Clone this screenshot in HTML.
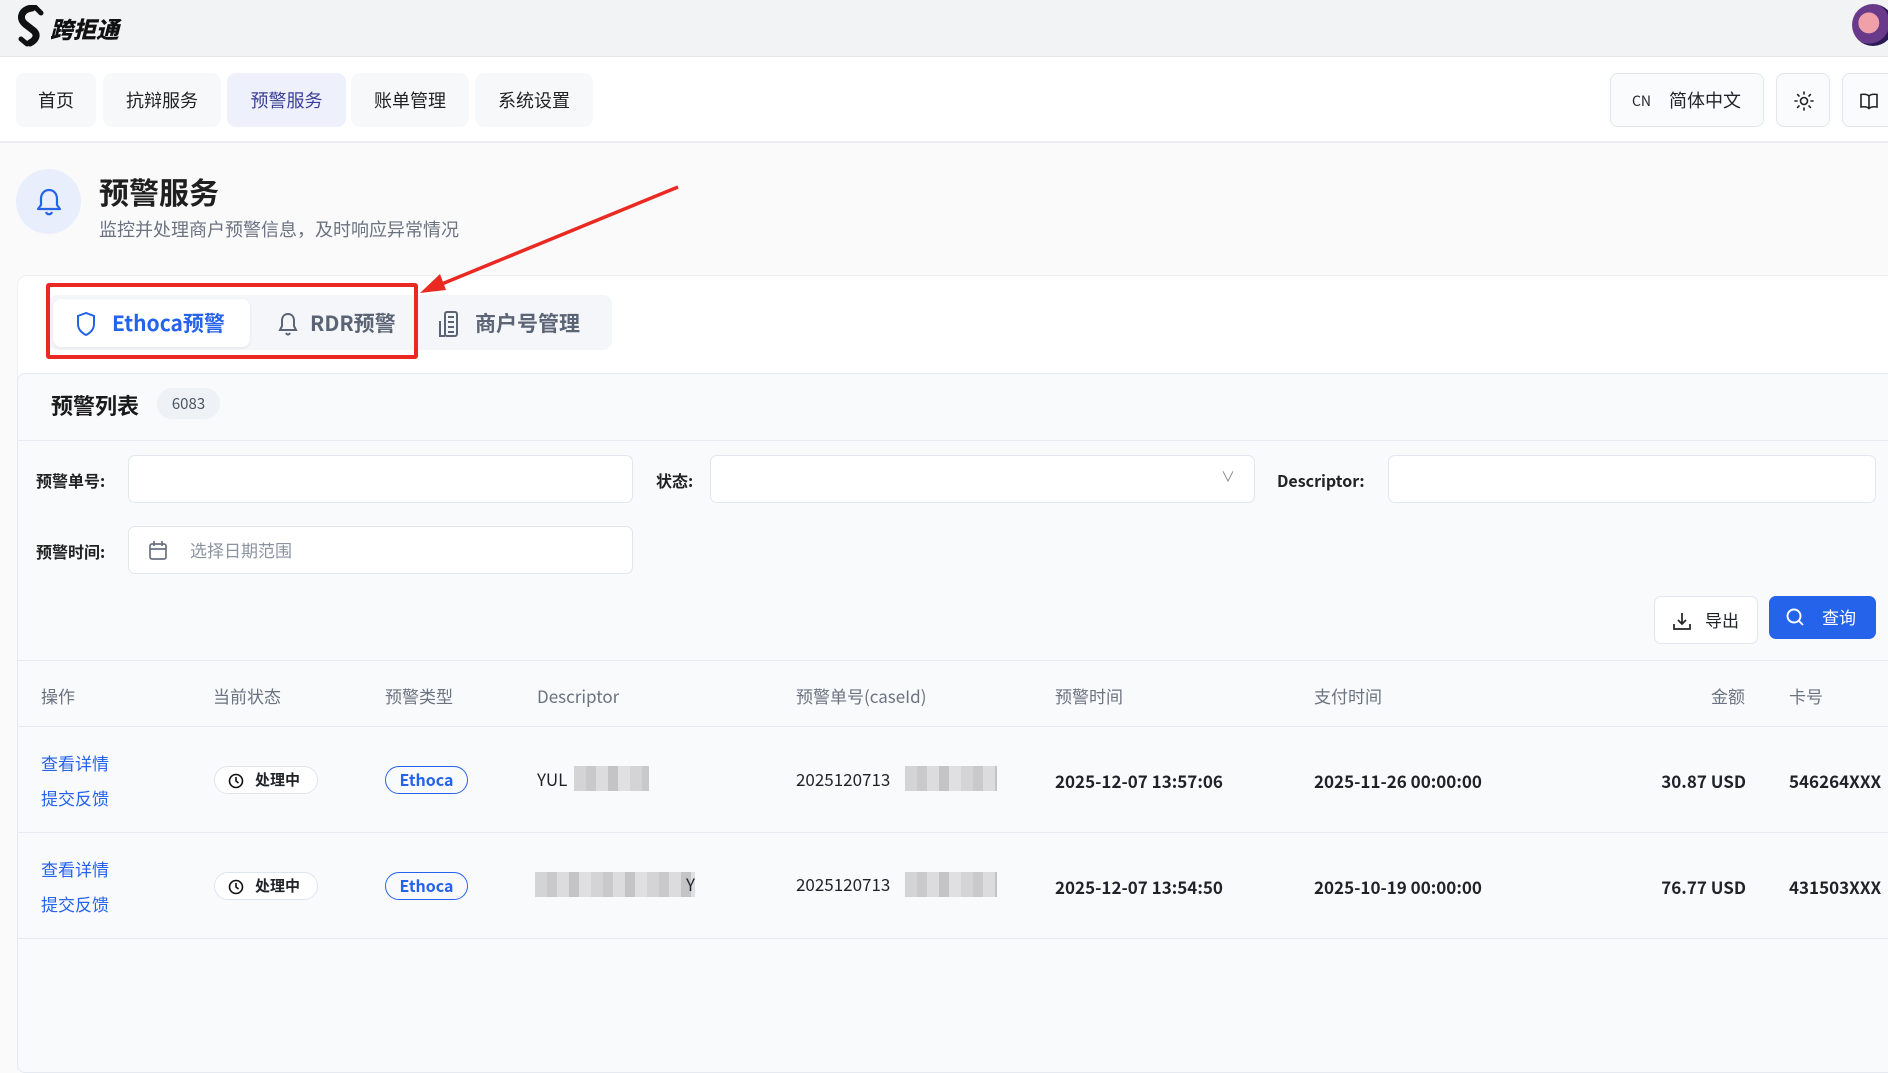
<!DOCTYPE html>
<html><head><meta charset="utf-8"><style>
*{box-sizing:border-box;margin:0;padding:0}
body{width:1888px;height:943px;overflow:hidden;background:#fafafb;font-family:"Noto Sans CJK SC","Liberation Sans",sans-serif;color:#1f2328;position:relative}
.abs{position:absolute}
.top{left:0;top:0;width:1888px;height:57px;background:#f2f3f5;border-bottom:1px solid #e5e7eb}
.nav{left:0;top:57px;width:1888px;height:86px;background:#fff;border-bottom:2px solid #ebedf0}
.tab{position:absolute;top:16px;height:54px;background:#f7f8fa;border-radius:9px;font-size:18px;line-height:54px;text-align:center;color:#222}
.tab.on{background:#eef1fc;color:#3b3f99}
.btn{position:absolute;top:16px;height:54px;border:1px solid #e2e6ee;border-radius:8px;background:#fafbfc}
.card{left:17px;top:275px;width:1900px;height:700px;background:#fff;border-radius:10px;border:1px solid #eef0f3}
.tg{left:48px;top:295px;width:564px;height:55px;background:#f4f6f9;border-radius:9px}
.tb{position:absolute;top:4px;height:48px;font-size:21px;font-weight:bold;line-height:48px;color:#5b6475}
.inner{left:17px;top:373px;width:1900px;height:700px;background:#f9fafc;border:1px solid #e6e9ef;border-radius:8px}
.lbl{position:absolute;font-size:16px;font-weight:bold;color:#222;line-height:24px}
.inp{position:absolute;height:48px;background:#fff;border:1px solid #e2e6ee;border-radius:7px}
.th{position:absolute;top:683px;font-size:17px;color:#6b7280;line-height:26px}
.td{position:absolute;font-size:17px;color:#1f2328;line-height:26px}
.b{font-weight:bold}
.lk{position:absolute;left:41px;font-size:17px;color:#2563eb;line-height:26px}
.st{position:absolute;left:214px;width:104px;height:28px;border:1px solid #dfe5f0;border-radius:14px;background:#fff;font-size:15px;font-weight:bold;line-height:26px;padding-left:40px}
.et{position:absolute;left:385px;width:83px;height:28px;border:1.5px solid #2563eb;border-radius:14px;font-size:16px;font-weight:bold;color:#2563eb;line-height:25px;text-align:center}
.line{position:absolute;left:17px;width:1900px;height:1px;background:#e6e9ef}
.blur{position:absolute;background:repeating-linear-gradient(90deg,#d4d4d6 0 12px,#c9c9cc 12px 22px,#dcdcde 22px 34px,#c4c4c7 34px 44px,#e0e0e2 44px 56px)}
</style></head><body>
<div class="abs top"></div>
<svg class="abs" style="left:15px;top:5px" width="32" height="42" viewBox="0 0 32 42"><path d="M17 3 C7 4 3 13 10 19 L19 26 C23 30 21 35 15 38" stroke="#111" stroke-width="7" fill="none" stroke-linecap="round"/><path d="M20 2 L26 8" stroke="#111" stroke-width="5" stroke-linecap="round"/><path d="M12 39 L6 34" stroke="#111" stroke-width="5" stroke-linecap="round"/></svg>
<div class="abs" style="left:50px;top:11px;font-size:23px;font-weight:900;font-style:italic;color:#111;line-height:34px">跨拒通</div>
<div class="abs" style="left:1852px;top:4px;width:42px;height:42px;border-radius:50%;background:radial-gradient(circle at 40% 45%,#f0a0a8 0 30%,#6a3a8a 31% 60%,#2a1b55 61%)"></div>

<div class="abs nav">
<div class="tab" style="left:16px;width:80px">首页</div>
<div class="tab" style="left:103px;width:118px">抗辩服务</div>
<div class="tab on" style="left:227px;width:119px">预警服务</div>
<div class="tab" style="left:351px;width:118px">账单管理</div>
<div class="tab" style="left:475px;width:118px">系统设置</div>
<div class="btn" style="left:1610px;width:154px"><span class="abs" style="left:21px;top:15px;font-size:14px;line-height:24px">CN</span><span class="abs" style="left:58px;top:12px;font-size:18px;line-height:28px">简体中文</span></div>
<div class="btn" style="left:1776px;width:54px"><svg class="abs" style="left:17px;top:17px" width="20" height="20" viewBox="0 0 20 20" fill="none" stroke="#222" stroke-width="1.6" stroke-linecap="round"><circle cx="10" cy="10" r="3.5"/><path d="M10 1v2M10 17v2M1 10h2M17 10h2M3.6 3.6l1.4 1.4M15 15l1.4 1.4M3.6 16.4L5 15M15 5l1.4-1.4"/></svg></div>
<div class="btn" style="left:1842px;width:60px"><svg class="abs" style="left:16px;top:17px" width="20" height="20" viewBox="0 0 20 20" fill="none" stroke="#222" stroke-width="1.6"><path d="M10 5C8 3 5 3 2 3.5V16c3-.5 6-.5 8 1.5 2-2 5-2 8-1.5V3.5C15 3 12 3 10 5zM10 5v12"/></svg></div>
</div>

<div class="abs" style="left:16px;top:169px;width:65px;height:65px;border-radius:50%;background:#e8eefb"></div>
<svg class="abs" style="left:35px;top:187px" width="28" height="30" viewBox="0 0 28 30" fill="none" stroke="#2563eb" stroke-width="2.2" stroke-linejoin="round"><path d="M14 3c-5 0-8 4-8 9v6l-3 4h22l-3-4v-6c0-5-3-9-8-9zM11 25c1 3 5 3 6 0"/></svg>
<div class="abs" style="left:99px;top:170px;font-size:30px;font-weight:bold;color:#1f1f1f;line-height:42px">预警服务</div>
<div class="abs" style="left:99px;top:215px;font-size:18px;color:#6b7280;line-height:28px">监控并处理商户预警信息，及时响应异常情况</div>

<div class="abs card"></div>
<div class="abs tg">
<div class="tb" style="left:5px;width:197px;background:#fff;border-radius:8px;color:#2563eb;box-shadow:0 1px 3px rgba(0,0,0,.08)"><svg class="abs" style="left:22px;top:12px" width="22" height="26" viewBox="0 0 22 26" fill="none" stroke="#2563eb" stroke-width="2"><path d="M11 2L3 5v8c0 6 4 9 8 11 4-2 8-5 8-11V5z"/></svg><span style="position:absolute;left:59px">Ethoca预警</span></div>
<div class="tb" style="left:205px;width:160px"><svg class="abs" style="left:24px;top:12px" width="22" height="26" viewBox="0 0 22 26" fill="none" stroke="#5b6475" stroke-width="2"><path d="M11 3c-4 0-6 3-6 7v5l-2 4h16l-2-4v-5c0-4-2-7-6-7zM9 22c1 2 3 2 4 0"/></svg><span style="position:absolute;left:57px">RDR预警</span></div>
<div class="tb" style="left:370px;width:190px"><svg class="abs" style="left:19px;top:10px" width="26" height="30" viewBox="0 0 26 30" fill="none" stroke="#5b6475" stroke-width="2"><rect x="8" y="3" width="12" height="24" rx="2"/><path d="M3 12v15h5M11 8h6M11 13h6M11 18h6M11 23h6"/></svg><span style="position:absolute;left:57px">商户号管理</span></div>
</div>
<div class="abs" style="left:46px;top:283px;width:372px;height:76px;border:4px solid #ea2a22;border-radius:3px"></div>
<svg class="abs" style="left:410px;top:180px" width="280" height="120"><path d="M268 7 L22 108" stroke="#ea2a22" stroke-width="3.5"/><path d="M10 113 L30 94 L36 110 Z" fill="#ea2a22"/></svg>

<div class="abs inner"></div>
<div class="abs" style="left:51px;top:389px;font-size:22px;font-weight:bold;color:#1a1a1a;line-height:32px">预警列表</div>
<div class="abs" style="left:157px;top:388px;width:63px;height:31px;border-radius:15px;background:#eef1f5;font-size:15px;color:#4b5563;text-align:center;line-height:31px">6083</div>
<div class="line" style="top:440px"></div>

<div class="lbl" style="left:36px;top:468px">预警单号:</div>
<div class="inp" style="left:128px;top:455px;width:505px"></div>
<div class="lbl" style="left:656px;top:468px">状态:</div>
<div class="inp" style="left:710px;top:455px;width:545px"><span class="abs" style="left:510px;top:11px;font-size:14px;color:#888">&#8744;</span></div>
<div class="lbl" style="left:1277px;top:468px">Descriptor:</div>
<div class="inp" style="left:1388px;top:455px;width:488px"></div>
<div class="lbl" style="left:36px;top:539px">预警时间:</div>
<div class="inp" style="left:128px;top:526px;width:505px"><svg class="abs" style="left:19px;top:13px" width="20" height="21" viewBox="0 0 20 21" fill="none" stroke="#6b7280" stroke-width="1.7"><rect x="2" y="4" width="16" height="15" rx="2"/><path d="M2 9h16M6 1v5M14 1v5"/></svg><span class="abs" style="left:61px;top:10px;font-size:17px;color:#8b93a1;line-height:26px">选择日期范围</span></div>

<div class="abs" style="left:1654px;top:596px;width:104px;height:48px;background:#fff;border:1px solid #e2e6ee;border-radius:7px"><svg class="abs" style="left:17px;top:14px" width="20" height="20" viewBox="0 0 20 20" fill="none" stroke="#222" stroke-width="1.7"><path d="M10 2v11M6 9l4 4 4-4M2 13v5h16v-5"/></svg><span class="abs" style="left:50px;top:10px;font-size:17px;line-height:26px">导出</span></div>
<div class="abs" style="left:1769px;top:596px;width:107px;height:43px;background:#2563eb;border-radius:7px"><svg class="abs" style="left:16px;top:11px" width="20" height="20" viewBox="0 0 20 20" fill="none" stroke="#fff" stroke-width="1.9"><circle cx="9" cy="9" r="6.5"/><path d="M14 14l4 4"/></svg><span class="abs" style="left:53px;top:8px;font-size:17px;color:#fff;line-height:26px">查询</span></div>

<div class="line" style="top:660px"></div>
<div class="th" style="left:41px">操作</div>
<div class="th" style="left:213px">当前状态</div>
<div class="th" style="left:385px">预警类型</div>
<div class="th" style="left:537px">Descriptor</div>
<div class="th" style="left:796px">预警单号(caseId)</div>
<div class="th" style="left:1055px">预警时间</div>
<div class="th" style="left:1314px">支付时间</div>
<div class="th" style="left:1711px">金额</div>
<div class="th" style="left:1789px">卡号</div>
<div class="line" style="top:726px"></div>

<div class="lk" style="top:750px">查看详情</div>
<div class="lk" style="top:785px">提交反馈</div>
<div class="st" style="top:766px"><svg class="abs" style="left:13px;top:6px" width="16" height="16" viewBox="0 0 16 16" fill="none" stroke="#111" stroke-width="1.6"><circle cx="8" cy="8" r="6.5"/><path d="M8 4v4l2.5 2"/></svg>处理中</div>
<div class="et" style="top:766px">Ethoca</div>
<div class="td" style="left:537px;top:766px">YUL</div>
<div class="blur" style="left:574px;top:766px;width:75px;height:25px"></div>
<div class="td" style="left:796px;top:766px">2025120713</div>
<div class="blur" style="left:905px;top:766px;width:92px;height:25px"></div>
<div class="td b" style="left:1055px;top:768px">2025-12-07 13:57:06</div>
<div class="td b" style="left:1314px;top:768px">2025-11-26 00:00:00</div>
<div class="td b" style="left:1656px;top:768px;width:90px;text-align:right">30.87 USD</div>
<div class="td b" style="left:1789px;top:768px">546264XXX</div>
<div class="line" style="top:832px"></div>

<div class="lk" style="top:856px">查看详情</div>
<div class="lk" style="top:891px">提交反馈</div>
<div class="st" style="top:872px"><svg class="abs" style="left:13px;top:6px" width="16" height="16" viewBox="0 0 16 16" fill="none" stroke="#111" stroke-width="1.6"><circle cx="8" cy="8" r="6.5"/><path d="M8 4v4l2.5 2"/></svg>处理中</div>
<div class="et" style="top:872px">Ethoca</div>
<div class="blur" style="left:535px;top:872px;width:160px;height:25px"></div>
<div class="td" style="left:686px;top:871px">Y</div>
<div class="td" style="left:796px;top:871px">2025120713</div>
<div class="blur" style="left:905px;top:872px;width:92px;height:25px"></div>
<div class="td b" style="left:1055px;top:874px">2025-12-07 13:54:50</div>
<div class="td b" style="left:1314px;top:874px">2025-10-19 00:00:00</div>
<div class="td b" style="left:1656px;top:874px;width:90px;text-align:right">76.77 USD</div>
<div class="td b" style="left:1789px;top:874px">431503XXX</div>
<div class="line" style="top:938px"></div>
</body></html>
